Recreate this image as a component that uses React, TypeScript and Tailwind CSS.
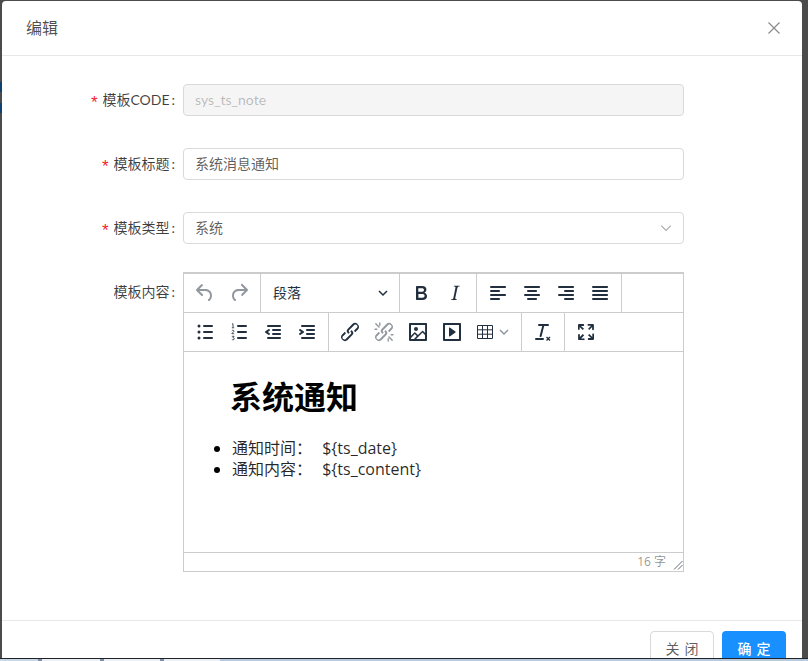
import React from "react";

const FONT = '"Lato", "Noto Sans CJK SC", sans-serif';
const CONTENT_FONT = '"Open Sans", "Noto Sans CJK SC", sans-serif';

// editor toolbar glyphs, 24x24 box
const paths: Record<string, string> = {
  undo: "M6.4 8H12c3.7 0 6.2 2 6.8 5.1.6 2.7-.4 5.6-2.3 6.8a1 1 0 0 1-1-1.8c1.1-.6 1.8-2.7 1.4-4.6-.5-2.1-2.1-3.5-4.9-3.5H6.4l3.3 3.3a1 1 0 1 1-1.4 1.4l-5-5a1 1 0 0 1 0-1.4l5-5a1 1 0 0 1 1.4 1.4L6.4 8z",
  redo: "M17.6 10H12c-2.8 0-4.4 1.4-4.9 3.5-.4 2 .3 4 1.4 4.6a1 1 0 1 1-1 1.8c-2-1.2-2.9-4.1-2.3-6.8.6-3 3-5.1 6.8-5.1h5.6l-3.3-3.3a1 1 0 1 1 1.4-1.4l5 5a1 1 0 0 1 0 1.4l-5 5a1 1 0 0 1-1.4-1.4l3.3-3.3z",
  bold: "M7.8 19c-.3 0-.5 0-.6-.2l-.2-.5V5.7c0-.2 0-.4.2-.5l.6-.2h5c1.5 0 2.7.3 3.5 1 .7.6 1.1 1.4 1.1 2.5a3 3 0 0 1-.6 1.9c-.4.6-1 1-1.6 1.2.4.1.9.3 1.3.6s.8.7 1 1.2c.4.4.5 1 .5 1.6 0 1.3-.4 2.3-1.3 3-.8.7-2.1 1-3.8 1H7.8zm5-8.3c.6 0 1.2-.1 1.6-.5.4-.3.6-.7.6-1.3 0-1.1-.8-1.7-2.3-1.7H9.3v3.5h3.4zm.5 6c.7 0 1.3-.1 1.7-.4.4-.4.6-.9.6-1.5s-.2-1-.7-1.4c-.4-.3-1-.4-2-.4H9.4v3.8h4z",
  italic: "M16.7 4.7l-.1.9h-.3c-.6 0-1 0-1.4.3-.3.3-.4.6-.5 1.1l-2.1 9.8v.6c0 .5.4.8 1.4.8h.2l-.2.8H8l.2-.8h.2c1.1 0 1.8-.5 2-1.5l2-9.8.1-.5c0-.6-.4-.8-1.4-.8h-.3l.2-.9h5.8z",
  left: "M5 5h14c.6 0 1 .4 1 1s-.4 1-1 1H5a1 1 0 1 1 0-2zm0 4h8c.6 0 1 .4 1 1s-.4 1-1 1H5a1 1 0 1 1 0-2zm0 8h8c.6 0 1 .4 1 1s-.4 1-1 1H5a1 1 0 0 1 0-2zm0-4h14c.6 0 1 .4 1 1s-.4 1-1 1H5a1 1 0 0 1 0-2z",
  center: "M5 5h14c.6 0 1 .4 1 1s-.4 1-1 1H5a1 1 0 1 1 0-2zm3 4h8c.6 0 1 .4 1 1s-.4 1-1 1H8a1 1 0 1 1 0-2zm0 8h8c.6 0 1 .4 1 1s-.4 1-1 1H8a1 1 0 0 1 0-2zm-3-4h14c.6 0 1 .4 1 1s-.4 1-1 1H5a1 1 0 0 1 0-2z",
  right: "M5 5h14c.6 0 1 .4 1 1s-.4 1-1 1H5a1 1 0 1 1 0-2zm6 4h8c.6 0 1 .4 1 1s-.4 1-1 1h-8a1 1 0 0 1 0-2zm0 8h8c.6 0 1 .4 1 1s-.4 1-1 1h-8a1 1 0 0 1 0-2zm-6-4h14c.6 0 1 .4 1 1s-.4 1-1 1H5a1 1 0 0 1 0-2z",
  justify: "M5 5h14c.6 0 1 .4 1 1s-.4 1-1 1H5a1 1 0 1 1 0-2zm0 4h14c.6 0 1 .4 1 1s-.4 1-1 1H5a1 1 0 1 1 0-2zm0 4h14c.6 0 1 .4 1 1s-.4 1-1 1H5a1 1 0 0 1 0-2zm0 4h14c.6 0 1 .4 1 1s-.4 1-1 1H5a1 1 0 0 1 0-2z",
  outdent: "M7 5h12c.6 0 1 .4 1 1s-.4 1-1 1H7a1 1 0 1 1 0-2zm5 4h7c.6 0 1 .4 1 1s-.4 1-1 1h-7a1 1 0 0 1 0-2zm0 4h7c.6 0 1 .4 1 1s-.4 1-1 1h-7a1 1 0 0 1 0-2zm-5 4h12a1 1 0 0 1 0 2H7a1 1 0 0 1 0-2zm1.6-3.8a1 1 0 0 1-1.2 1.6l-3-2a1 1 0 0 1 0-1.6l3-2a1 1 0 0 1 1.2 1.6L6.8 12l1.8 1.2z",
  indent: "M7 5h12c.6 0 1 .4 1 1s-.4 1-1 1H7a1 1 0 1 1 0-2zm5 4h7c.6 0 1 .4 1 1s-.4 1-1 1h-7a1 1 0 0 1 0-2zm0 4h7c.6 0 1 .4 1 1s-.4 1-1 1h-7a1 1 0 0 1 0-2zm-5 4h12a1 1 0 0 1 0 2H7a1 1 0 0 1 0-2zm-2.6-3.8L6.2 12l-1.8-1.2a1 1 0 0 1 1.2-1.6l3 2a1 1 0 0 1 0 1.6l-3 2a1 1 0 1 1-1.2-1.6z",
  link: "M6.2 12.3a1 1 0 0 1 1.4 1.4l-2 2a2 2 0 1 0 2.6 2.8l4.8-4.8a1 1 0 0 0 0-1.4 1 1 0 1 1 1.4-1.3 2.9 2.9 0 0 1 0 4L9.6 20a3.9 3.9 0 0 1-5.5-5.5l2-2zm11.6-.6a1 1 0 0 1-1.4-1.4l2-2a2 2 0 1 0-2.6-2.8L11 10.3a1 1 0 0 0 0 1.4A1 1 0 1 1 9.6 13a2.9 2.9 0 0 1 0-4L14.4 4a3.9 3.9 0 0 1 5.5 5.5l-2 2z",
  image: "M5 15.7l3.3-3.2c.3-.3.7-.3 1 0L12 15l4.1-4c.3-.4.8-.4 1 0l2 1.9V5H5v10.7zM5 18V19h3l2.8-2.9-2-2L5 17.9zm14-3l-2.5-2.4-6.4 6.5H19v-4.1zM4 3h16c.6 0 1 .4 1 1v16c0 .6-.4 1-1 1H4a1 1 0 0 1-1-1V4c0-.6.4-1 1-1zm6 8a2 2 0 1 0 0-4 2 2 0 0 0 0 4z",
  media: "M4 3h16c.6 0 1 .4 1 1v16c0 .6-.4 1-1 1H4a1 1 0 0 1-1-1V4c0-.6.4-1 1-1zm1 2v14h14V5H5zm4.8 2.6l5.6 4a.5.5 0 0 1 0 .8l-5.6 4A.5.5 0 0 1 9 16V8a.5.5 0 0 1 .8-.4z",
  clear: "M13.2 6l-2.6 10.2a1 1 0 0 1-1 .8h-.2a.8.8 0 0 1-.8-1L11.2 6H8a1 1 0 1 1 0-2h9a1 1 0 0 1 0 2h-3.8zM5 18h7a1 1 0 0 1 0 2H5a1 1 0 0 1 0-2z",
  full: "M15.3 10l-1.2-1.3 2.9-3h-2.3a.9.9 0 1 1 0-1.7H19c.5 0 .9.4.9.9v4.4a.9.9 0 1 1-1.8 0V7l-2.9 3zm0 4l3 3v-2.3a.9.9 0 1 1 1.7 0V19c0 .5-.4.9-.9.9h-4.4a.9.9 0 1 1 0-1.8H17l-3-2.9 1.3-1.2zM10 15.4l-2.9 3h2.3a.9.9 0 1 1 0 1.7H5a.9.9 0 0 1-.9-.9v-4.4a.9.9 0 1 1 1.8 0V17l2.9-3 1.2 1.3zM8.7 10L5.7 7v2.3a.9.9 0 0 1-1.7 0V5c0-.5.4-.9.9-.9h4.4a.9.9 0 0 1 0 1.8H7l3 2.9-1.3 1.2z",
};

const ToolIcon = ({ name, muted }: { name: string; muted?: boolean }) => (
  <svg viewBox="0 0 24 24" className={muted ? "w-6 h-6 text-[#222f3e]/50" : "w-6 h-6 text-[#222f3e]"} fill="currentColor">
    <path d={paths[name]} fillRule="evenodd" />
  </svg>
);

const ToolBtn = ({ children }: { children: React.ReactNode }) => (
  <div className="w-[34px] h-[34px] flex items-center justify-center">{children}</div>
);

const Group = ({ children, last }: { children: React.ReactNode; last?: boolean }) => (
  <div className={last ? "flex items-center px-1" : "flex items-center px-1 border-r border-[#ccc]"}>{children}</div>
);

const Chevron = ({ className, thin }: { className: string; thin?: boolean }) => (
  <svg viewBox="0 0 10 10" className={className} fill="none" stroke="currentColor" strokeWidth={thin ? 0.9 : 1.5}>
    <path d="M1 3l4 4 4-4" />
  </svg>
);

const BulletList = () => (
  <svg viewBox="0 0 24 24" className="w-6 h-6 text-[#222f3e]" fill="currentColor">
    <circle cx="6" cy="6" r="1.5" />
    <circle cx="6" cy="12" r="1.5" />
    <circle cx="6" cy="18" r="1.5" />
    <path d="M11 5h8a1 1 0 0 1 0 2h-8a1 1 0 0 1 0-2zm0 6h8a1 1 0 0 1 0 2h-8a1 1 0 0 1 0-2zm0 6h8a1 1 0 0 1 0 2h-8a1 1 0 0 1 0-2z" />
  </svg>
);

const NumberList = () => (
  <svg viewBox="0 0 24 24" className="w-6 h-6 text-[#222f3e]" fill="currentColor">
    <path d="M11 5h8a1 1 0 0 1 0 2h-8a1 1 0 0 1 0-2zm0 6h8a1 1 0 0 1 0 2h-8a1 1 0 0 1 0-2zm0 6h8a1 1 0 0 1 0 2h-8a1 1 0 0 1 0-2z" />
    <g fill="none" stroke="currentColor" strokeWidth="0.8">
      <path d="M5 4.2l1-.5v4M4.8 7.8h2.4" />
      <path d="M4.8 10.8c.5-.8 2.3-.7 2.2.4 0 .8-2.2 1.6-2.2 2.5H7.2" />
      <path d="M4.8 16.3h2.3l-1.2 1.5c1 0 1.4.4 1.4 1s-.6 1-1.2 1-1-.2-1.3-.5" />
    </g>
  </svg>
);

const Unlink = () => (
  <svg viewBox="0 0 24 24" className="w-6 h-6 text-[#222f3e]/50" fill="currentColor">
    <path d={paths.link} />
    <path d="M7 7L3.8 3.8M4.8 9.3H3M7.8 5.3V3M17 17l3.2 3.2M19.2 14.7H21M16.2 18.7V21" stroke="currentColor" strokeWidth="1.4" strokeLinecap="round" />
  </svg>
);

const TableIcon = () => (
  <svg viewBox="0 0 16 16" className="w-4 h-4 text-[#222f3e]" fill="none" stroke="currentColor" strokeWidth="1">
    <path d="M.5 1.5h15v13H.5zM.5 5.8h15M.5 10.2h15M5.5 1.5v13M10.5 1.5v13" />
  </svg>
);

const ClearFormat = () => (
  <svg viewBox="0 0 24 24" className="w-6 h-6 text-[#222f3e]" fill="currentColor">
    <path d={paths.clear} />
    <path d="M15.5 17l3.5 3.5M19 17l-3.5 3.5" stroke="currentColor" strokeWidth="1.3" fill="none" />
  </svg>
);

const FormRow = ({
  label,
  required,
  top,
  children,
}: {
  label: string;
  required?: boolean;
  top?: boolean;
  children: React.ReactNode;
}) => (
  <div className={top ? "flex -mt-1" : "flex"}>
    <label
      className={
        top
          ? "w-[181px] pr-2 h-10 flex items-center justify-end text-sm text-black/75 whitespace-nowrap"
          : "w-[181px] pr-2 h-8 flex items-center justify-end text-sm text-black/75 whitespace-nowrap"
      }
    >
      {required && <span className="text-[#f5222d] mr-[3px] text-[17px] leading-none pt-1.5 font-['Liberation_Mono']">*</span>}
      {label}
      <span className="ml-0.5">:</span>
    </label>
    <div className="w-[501px]">{children}</div>
  </div>
);

export default function App() {
  return (
    <div className="w-[808px] h-[661px] overflow-hidden flex flex-col bg-[#4b4b4b]" style={{ fontFamily: FONT }}>
      <div className="flex flex-1 min-h-0 pt-px">
        {/* page showing through on the left edge */}
        <div className="w-0.5 shrink-0 flex flex-col gap-[11px] pt-[81px]">
          <div className="h-2.5 bg-[#0f4270]" />
          <div className="h-2.5 bg-[#0f4270]" />
        </div>
        <div className="w-[800px] h-[657px] bg-white rounded-t flex flex-col overflow-hidden">
          {/* Header */}
          <div className="h-[55px] shrink-0 flex items-center justify-between pl-6 pr-[22px] border-b border-[#e8e8e8]">
            <span className="text-base text-black/70">编辑</span>
            <svg viewBox="0 0 12 12" className="w-3 h-3 text-black/45" fill="none" stroke="currentColor" strokeWidth="1.3">
              <path d="M.5.5l11 11M11.5.5l-11 11" />
            </svg>
          </div>

          {/* Form */}
          <div className="h-[564px] shrink-0 pt-7 flex flex-col gap-8">
            <FormRow label="模板CODE" required>
              <div className="h-8 px-[11px] flex items-center rounded border border-[#d9d9d9] bg-[#f5f5f5] text-sm text-black/25">
                sys_ts_note
              </div>
            </FormRow>
            <FormRow label="模板标题" required>
              <div className="h-8 px-[11px] flex items-center rounded border border-[#d9d9d9] text-sm text-black/65">
                系统消息通知
              </div>
            </FormRow>
            <FormRow label="模板类型" required>
              <div className="h-8 pl-[11px] pr-[11px] flex items-center justify-between rounded border border-[#d9d9d9] text-sm text-black/65">
                系统
                <Chevron thin className="w-3 h-3 text-black/35" />
              </div>
            </FormRow>
            <FormRow label="模板内容" top>
              <div className="h-[300px] flex flex-col border border-[#ccc] border-t-2">
                <div className="h-[39px] flex items-stretch border-b border-[#ccc] shrink-0">
                  <Group>
                    <ToolBtn><ToolIcon name="undo" muted /></ToolBtn>
                    <ToolBtn><ToolIcon name="redo" muted /></ToolBtn>
                  </Group>
                  <div className="w-[139px] pl-3 pr-[11px] flex items-center justify-between border-r border-[#ccc] text-sm text-[#222f3e]">
                    段落
                    <Chevron className="w-2.5 h-2.5 text-[#222f3e]" />
                  </div>
                  <Group>
                    <ToolBtn><ToolIcon name="bold" /></ToolBtn>
                    <ToolBtn><ToolIcon name="italic" /></ToolBtn>
                  </Group>
                  <Group>
                    <ToolBtn><ToolIcon name="left" /></ToolBtn>
                    <ToolBtn><ToolIcon name="center" /></ToolBtn>
                    <ToolBtn><ToolIcon name="right" /></ToolBtn>
                    <ToolBtn><ToolIcon name="justify" /></ToolBtn>
                  </Group>
                </div>
                <div className="h-[39px] flex items-stretch border-b border-[#ccc] shrink-0">
                  <Group>
                    <ToolBtn><BulletList /></ToolBtn>
                    <ToolBtn><NumberList /></ToolBtn>
                    <ToolBtn><ToolIcon name="outdent" /></ToolBtn>
                    <ToolBtn><ToolIcon name="indent" /></ToolBtn>
                  </Group>
                  <Group>
                    <ToolBtn><ToolIcon name="link" /></ToolBtn>
                    <ToolBtn><Unlink /></ToolBtn>
                    <ToolBtn><ToolIcon name="image" /></ToolBtn>
                    <ToolBtn><ToolIcon name="media" /></ToolBtn>
                    <div className="w-12 h-[34px] pl-2 flex items-center gap-1.5">
                      <TableIcon />
                      <Chevron className="w-2.5 h-2.5 text-[#222f3e]/50" />
                    </div>
                  </Group>
                  <Group>
                    <ToolBtn><ClearFormat /></ToolBtn>
                  </Group>
                  <Group last>
                    <ToolBtn><ToolIcon name="full" /></ToolBtn>
                  </Group>
                </div>

                {/* Editor body */}
                <div className="flex-1 px-4 pt-[23px] text-black" style={{ fontFamily: CONTENT_FONT }}>
                  <h1 className="text-[32px] leading-[44px] font-bold pl-[30px]">系统通知</h1>
                  <ul className="mt-[19px] pl-8 list-disc text-base leading-[21px] text-black/85 marker:text-black">
                    <li>通知时间：<span className="ml-1.5"> $&#123;ts_date&#125;</span></li>
                    <li>通知内容：<span className="ml-1.5"> $&#123;ts_content&#125;</span></li>
                  </ul>
                </div>

                <div className="h-[19px] shrink-0 flex items-center justify-end border-t border-[#ccc] text-xs text-black/45 font-['Open_Sans','Noto_Sans_CJK_SC',sans-serif]">
                  <span>16 字</span>
                  <svg viewBox="0 0 10 10" className="w-2.5 h-2.5 ml-[7px] mt-1.5 text-[#222f3e]/70" fill="none" stroke="currentColor" strokeWidth="1">
                    <path d="M1 9.5L9.5 1M5 9.5L9.5 5" />
                  </svg>
                </div>
              </div>
            </FormRow>
          </div>

          {/* Footer */}
          <div className="flex-1 flex justify-end gap-2 pt-2.5 pr-4 border-t border-[#e8e8e8]">
            <div className="w-16 h-9 pl-[5px] flex items-center justify-center rounded border border-[#d9d9d9] text-sm text-black/65 tracking-[5px]">
              关闭
            </div>
            <div className="w-16 h-9 pl-[5px] flex items-center justify-center rounded bg-[#1890ff] text-sm font-medium text-white tracking-[5px]">
              确定
            </div>
          </div>
        </div>
      </div>

      {/* page behind the modal */}
      <div className="h-[3px] shrink-0 flex border-t border-[#222]">
        <div className="w-[38px] bg-[#c9d8e8]" />
        <div className="w-1 bg-[#7d8fa5]" />
        <div className="w-[58px] bg-[#eaf0f6]" />
        <div className="w-1 bg-[#7d8fa5]" />
        <div className="w-14 bg-[#eaf0f6]" />
        <div className="w-1 bg-[#7d8fa5]" />
        <div className="w-14 bg-[#eaf0f6]" />
        <div className="flex-1 bg-[#b7cbe0]" />
      </div>
    </div>
  );
}
